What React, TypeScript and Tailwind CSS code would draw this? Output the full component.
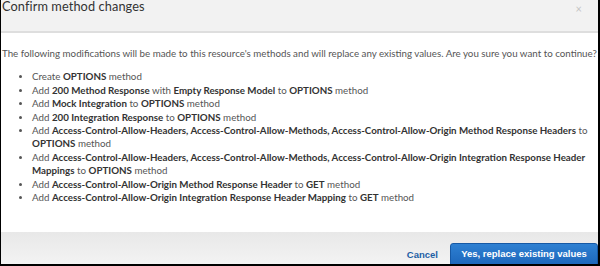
import React from "react";

const B = ({ children }: { children: React.ReactNode }) => (
  <span className="font-bold text-[#333]">{children}</span>
);

export default function App() {
  const items: React.ReactNode[] = [
    <>Create <B>OPTIONS</B> method</>,
    <>Add <B>200 Method Response</B> with <B>Empty Response Model</B> to <B>OPTIONS</B> method</>,
    <>Add <B>Mock Integration</B> to <B>OPTIONS</B> method</>,
    <>Add <B>200 Integration Response</B> to <B>OPTIONS</B> method</>,
    <>Add <B>Access-Control-Allow-Headers, Access-Control-Allow-Methods, Access-Control-Allow-Origin Method Response Headers</B> to <B>OPTIONS</B> method</>,
    <>Add <B>Access-Control-Allow-Headers, Access-Control-Allow-Methods, Access-Control-Allow-Origin Integration Response Header Mappings</B> to <B>OPTIONS</B> method</>,
    <>Add <B>Access-Control-Allow-Origin Method Response Header</B> to <B>GET</B> method</>,
    <>Add <B>Access-Control-Allow-Origin Integration Response Header Mapping</B> to <B>GET</B> method</>,
  ];
  return (
    <div className="w-[600px] h-[266px] overflow-hidden bg-white border-l border-r-2 border-b-2 border-black flex flex-col" style={{ fontFamily: "Lato, 'Open Sans', sans-serif" }}>
      <div className="h-[33px] shrink-0 bg-[#f2f2f2] border-b-2 border-[#dedede] flex items-start justify-between">
        <div className="text-[12.75px] leading-[14px] text-[#333] pl-[1px] -mt-[1px] tracking-[0.1px]">Confirm method changes</div>
        <div className="text-[11px] leading-[11px] text-[#c4c4c4] mt-[3px] mr-[16px]">×</div>
      </div>
      <div className="flex-1 pl-[1px] pt-[14px] text-[9.75px] leading-[13.4px] text-[#555]">
        <p>The following modifications will be made to this resource's methods and will replace any existing values. Are you sure you want to continue?</p>
        <ul className="mt-[10px] pl-[30px] pr-[8px] list-disc">
          {items.map((it, i) => (
            <li key={i} className="marker:text-[#555] marker:text-[9px]">{it}</li>
          ))}
        </ul>
      </div>
      <div className="h-[32px] shrink-0 bg-gradient-to-b from-[#e8e8e8] to-[#f3f3f3] flex items-start justify-end pt-[11px]">
        <button className="mt-[5px] mr-[12px] text-[9.5px] font-bold text-[#1d5fa5]" style={{ fontFamily: "'Liberation Sans', Arial, sans-serif" }}>Cancel</button>
        <button className="h-[26px] w-[148px] rounded-t-[3px] border border-[#1659a5] bg-gradient-to-b from-[#2e80d2] to-[#1a63b8] text-white text-[9.5px] font-bold pb-[4px]" style={{ fontFamily: "'Liberation Sans', Arial, sans-serif" }}>Yes, replace existing values</button>
      </div>
    </div>
  );
}
